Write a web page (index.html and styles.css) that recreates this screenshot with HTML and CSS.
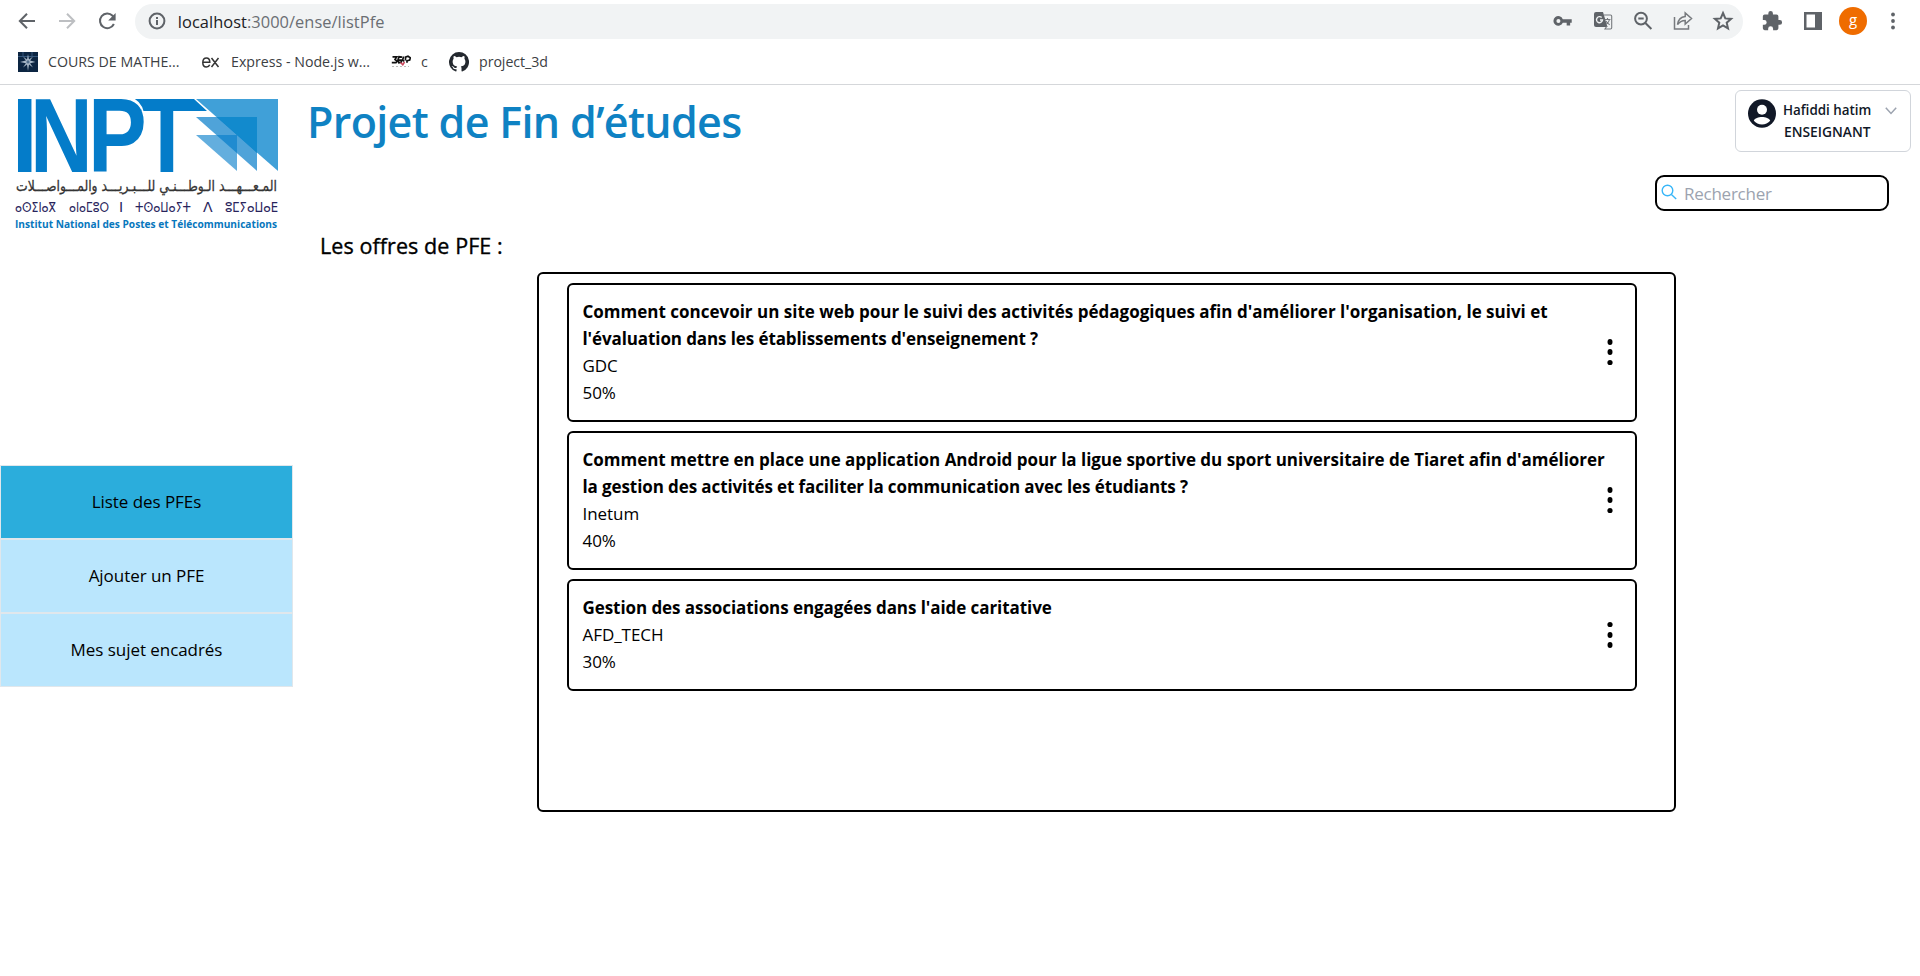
FILE: index.html
```html
<!DOCTYPE html>
<html lang="fr">
<head>
<meta charset="utf-8">
<title>Projet de Fin d’études</title>
<link rel="stylesheet" href="styles.css">
</head>
<body>
<header class="browser">
  <div class="toolbar">
    <nav class="nav-buttons">
      <svg width="24" height="24" viewBox="0 0 24 24"><path class="stroke" d="M20 12H5M12 4.7 4.8 12l7.2 7.3"/></svg>
      <svg width="24" height="24" viewBox="0 0 24 24"><path class="stroke faded" d="M4 12h15M12 4.7l7.2 7.3-7.2 7.3"/></svg>
      <svg width="24" height="24" viewBox="0 0 24 24"><path class="stroke" d="M18.9 15a7.3 7.3 0 1 1-1.3-8.2l1.4 1.6"/><path class="solid" d="M20.6 4v7.4h-7.4z"/></svg>
    </nav>
    <div class="address">
      <svg width="20" height="20" viewBox="0 0 20 20"><circle class="stroke" cx="10" cy="10" r="7.4"/><path class="solid" d="M9 9h2v5H9zM9 6h2v2H9z"/></svg>
      <span class="url"><b>localhost</b>:3000/ense/listPfe</span>
      <div class="address-icons">
        <svg width="22" height="22" viewBox="0 0 24 24"><path class="solid" fill-rule="evenodd" d="M11.800 10H21.500v3.800h-1.700v3.200h-3.800v-3.200h-4.200a5.300 5.300 0 1 1 0-3.800zM7 9.700a2.200 2.200 0 1 0 0 4.400 2.200 2.200 0 0 0 0-4.400z"/></svg>
        <svg width="22" height="22" viewBox="0 0 22 22"><path class="solid" d="M4 2h7l4.500 15H4a2 2 0 0 1-2-2V4a2 2 0 0 1 2-2z"/><path class="thin" d="M12 5h6.500a1.200 1.200 0 0 1 1.200 1.200v11.600a1.200 1.200 0 0 1-1.200 1.200H13l2-3M12.500 9.500h6M15.500 8v1.500M17.500 9.500c-.4 2.400-2 3.700-3 4.500M14 11c1 2 2.500 3 3.700 3.700"/><path class="knockout" d="M9.700 7.600A3 3 0 1 0 10.500 10H8"/></svg>
        <svg width="22" height="22" viewBox="0 0 22 22"><circle class="stroke" cx="9" cy="8.600" r="5.900"/><path class="stroke" d="M13.400 13l6 6M6.300 8.600h5.400"/></svg>
        <svg width="22" height="22" viewBox="0 0 22 22"><path class="thin wide" d="M2.500 7v12h14v-4M5.500 14.500c.7-5 3-7.500 7.700-8V3l6.300 5.500-6.300 5.500v-3.600c-3.500.1-5.700 1.300-7.700 4.100z"/></svg>
        <svg width="22" height="22" viewBox="0 0 22 22"><path class="stroke" d="M11 3l2.300 5.400 5.800.5-4.400 3.800 1.300 5.700-5-3-5 3 1.300-5.700L2.900 8.900l5.800-.5z"/></svg>
      </div>
    </div>
    <div class="browser-actions">
      <svg width="22" height="22" viewBox="0 0 24 24"><path class="solid" d="M20.500 11H19V7a2 2 0 0 0-2-2h-4V3.500a2.500 2.500 0 0 0-5 0V5H4a2 2 0 0 0-2 2v3.800h1.500a2.700 2.700 0 0 1 0 5.400H2V20a2 2 0 0 0 2 2h3.800v-1.500a2.700 2.700 0 0 1 5.400 0V22H17a2 2 0 0 0 2-2v-4h1.500a2.500 2.500 0 0 0 0-5z"/></svg>
      <svg width="18" height="18" viewBox="0 0 18 18"><path class="solid" fill-rule="evenodd" d="M0 0h18v18H0zM2.500 2.500v13H11v-13z"/></svg>
      <span class="avatar">g</span>
      <svg width="6" height="18" viewBox="0 0 6 18"><g class="solid"><circle cx="3" cy="2.500" r="1.900"/><circle cx="3" cy="9" r="1.900"/><circle cx="3" cy="15.500" r="1.900"/></g></svg>
    </div>
  </div>
  <div class="bookmarks">
    <a class="bookmark b-cours"><svg width="20" height="20" viewBox="0 0 20 20"><path fill="#0c2542" d="M0 0h20v20H0z"/><path stroke="#35577c" d="M0 4.500h20M5 0v5M14 0v5"/><path fill="#a9b8c8" d="M10 2l1 5.600 4-3.200-2.900 4.100 5.400 1.400-5.400 1.400 2.900 4.300-4-3L10 19l-1-6.400-4 3 2.900-4.300L2 9.900l5.900-1.400L5 4.400l4 3.200z"/><circle cx="10" cy="9.900" r="1.600" fill="#536f8c"/></svg>COURS DE MATHE...</a>
    <a class="bookmark b-express"><svg width="20" height="20" viewBox="0 0 20 20"><path fill="none" stroke="#333" stroke-width="1.500" d="M1.800 10.200h7c0-3-1.300-4.300-3.400-4.300S1.800 7.500 1.800 10.500s1.500 4.500 3.600 4.500c1.700 0 2.800-.8 3.300-2.200M10.500 6l7 9M17.500 6l-7 9"/></svg>Express - Node.js w...</a>
    <a class="bookmark b-c"><svg width="20" height="20" viewBox="0 0 20 20"><path fill="none" stroke="#111" stroke-width="1.700" d="M1.500 4.800h4.200L4 7.500l2 1.700-1 1.500H.800M11 5.200 8 4.800 6.800 8.500l1 2.200 2.500-.5.400-2H7.500M12.500 4.500l-.8 3.500 1.500 1.500M14.500 8.500V5.200l2.500-.9 2.300 1.500-.6 2.200-2.700.8v2"/><path fill="none" stroke="#c9455b" stroke-width="1.500" d="M9.500 10.500l2.300 2.200L13.500 10"/><path stroke="#bbb" stroke-dasharray="2 2" d="M1 14.500h17"/></svg>c</a>
    <a class="bookmark b-github"><svg width="20" height="20" viewBox="0 0 16 16"><path fill="#24292f" d="M8 0a8 8 0 0 0-2.530 15.590c.4.070.55-.17.55-.38v-1.490c-2.230.48-2.700-.95-2.700-.95-.36-.92-.89-1.170-.89-1.170-.73-.5.060-.49.060-.49.800.060 1.230.83 1.230.83.710 1.230 1.870.87 2.330.67.070-.52.280-.88.510-1.080-1.780-.2-3.640-.89-3.640-3.950 0-.87.310-1.590.82-2.150-.08-.2-.36-1.020.08-2.120 0 0 .67-.22 2.200.82a7.500 7.500 0 0 1 4 0c1.530-1.040 2.200-.82 2.200-.82.440 1.100.16 1.920.08 2.120.51.560.82 1.270.82 2.150 0 3.070-1.870 3.750-3.650 3.950.29.250.54.730.54 1.480v2.200c0 .21.150.46.550.38A8 8 0 0 0 8 0z"/></svg>project_3d</a>
  </div>
</header>

<div class="page">
  <aside class="sidebar">
    <svg class="logo" width="293" height="155" viewBox="0 85 293 155">
      <g class="logo-letters">
        <text transform="translate(11.700 172) scale(.88 1)">I</text>
        <text transform="translate(30.100 172) scale(.82 1)">N</text>
        <text transform="translate(88 172) scale(.83 1)">P</text>
        <text transform="translate(140 172) scale(.83 1)">T</text>
      </g>
      <path fill="#047cc9" d="M134 99h60l13 12h-64c-2-5-5-9-9-12z"/>
      <path fill="none" stroke="#fff" stroke-width="1.500" d="M131 98c6 2 10 6 12 14"/>
      <path fill="#40a0d8" d="M196 99h82v72z"/>
      <path fill="#047cc9" fill-opacity=".7" d="M196 117h61v54z"/>
      <path fill="#047cc9" fill-opacity=".62" d="M196 135h41v36z"/>
      <path fill="#128acd" d="M217 117h40v36z"/>
      <text class="logo-arabic" x="277" y="191" direction="rtl" textLength="261" lengthAdjust="spacingAndGlyphs">المـعـــهـــد الـوطـــنـي للـــبـريـــد والمـــواصـــلات</text>
      <g class="logo-tifinagh">
        <text x="15" y="212" textLength="41" lengthAdjust="spacingAndGlyphs">ⴰⵙⵉⵏⴰⴳ</text>
        <text x="69" y="212" textLength="40" lengthAdjust="spacingAndGlyphs">ⴰⵏⴰⵎⵓⵔ</text>
        <text x="119" y="212">ⵏ</text>
        <text x="135" y="212" textLength="56" lengthAdjust="spacingAndGlyphs">ⵜⵙⴰⵡⴰⵢⵜ</text>
        <text x="203" y="212">ⴷ</text>
        <text x="225" y="212" textLength="53" lengthAdjust="spacingAndGlyphs">ⵓⵎⵢⴰⵡⴰⴹ</text>
      </g>
      <text class="logo-french" x="15" y="228" textLength="262" lengthAdjust="spacingAndGlyphs">Institut National des Postes et Télécommunications</text>
    </svg>
    <nav class="menu">
      <a class="menu-item active">Liste des PFEs</a>
      <a class="menu-item">Ajouter un PFE</a>
      <a class="menu-item">Mes sujet encadrés</a>
    </nav>
  </aside>

  <main class="content">
    <div class="top">
      <h1>Projet de Fin d’études</h1>
      <div class="user">
        <svg width="28" height="29" viewBox="0 0 28 29"><ellipse cx="14" cy="14.500" rx="14" ry="14.300" fill="#111827"/><circle cx="14" cy="10.800" r="5" fill="#fff"/><path fill="#fff" d="M5.800 21.800c1-2.400 4.700-3.700 8.200-3.700s7.200 1.300 8.200 3.700c-2 2.400-5 3.600-8.200 3.600s-6.200-1.200-8.200-3.600z"/></svg>
        <div class="user-text"><span class="user-name">Hafiddi hatim</span><span class="user-role">ENSEIGNANT</span></div>
        <svg class="chevron" width="12" height="8" viewBox="0 0 12 8"><path fill="none" stroke="#9ca3af" stroke-width="1.500" d="M.8.800 6 6.500 11.200.8"/></svg>
      </div>
    </div>
    <label class="search">
      <svg width="16" height="16" viewBox="0 0 16 16"><g fill="none" stroke="#38b6f8" stroke-width="1.400"><circle cx="6.500" cy="6.500" r="5.300"/><path d="M10.400 10.400l4.800 4.600"/></g></svg>
      <span>Rechercher</span>
    </label>
    <h2>Les offres de PFE :</h2>
    <section class="panel">
      <article class="card">
        <div class="card-text">
          <h3>Comment concevoir un site web pour le suivi des activités pédagogiques afin d'améliorer l'organisation, le suivi et<br><span class="tight">l'évaluation dans les établissements d'enseignement ?</span></h3>
          <p>GDC</p><p>50%</p>
        </div>
        <svg class="dots" width="6" height="28" viewBox="0 0 6 28"><ellipse cx="3" cy="4" rx="2.500" ry="2.900"/><ellipse cx="3" cy="14" rx="2.500" ry="2.900"/><circle cx="3" cy="24.500" r="2.600"/></svg>
      </article>
      <article class="card">
        <div class="card-text">
          <h3><span class="snug">Comment mettre en place une application Android pour la ligue sportive du sport universitaire de Tiaret afin d'améliorer</span><br><span class="tight">la gestion des activités et faciliter la communication avec les étudiants ?</span></h3>
          <p>Inetum</p><p>40%</p>
        </div>
        <svg class="dots" width="6" height="28" viewBox="0 0 6 28"><ellipse cx="3" cy="4" rx="2.500" ry="2.900"/><ellipse cx="3" cy="14" rx="2.500" ry="2.900"/><circle cx="3" cy="24.500" r="2.600"/></svg>
      </article>
      <article class="card">
        <div class="card-text">
          <h3><span class="close">Gestion des associations engagées dans l'aide caritative</span></h3>
          <p>AFD_TECH</p><p>30%</p>
        </div>
        <svg class="dots dots-low" width="6" height="28" viewBox="0 0 6 28"><circle cx="3" cy="3.500" r="2.600"/><ellipse cx="3" cy="14" rx="2.500" ry="2.900"/><ellipse cx="3" cy="24" rx="2.500" ry="2.900"/></svg>
      </article>
    </section>
  </main>
</div>
</body>
</html>
```
FILE: styles.css
```css
* { box-sizing: border-box; }
body { margin: 0; background: #fff; color: #000; font: 17px/27px "Open Sans", "Noto Sans", sans-serif; }
h1, h2, h3, p { margin: 0; }
svg { display: block; flex: none; }

.browser { height: 85px; border-bottom: 1px solid #d5d7da; }
.toolbar { display: flex; align-items: center; height: 42px; padding-right: 24px; }
.nav-buttons { display: flex; gap: 16px; width: 135px; padding-left: 15px; }
.stroke { fill: none; stroke: #5f6368; stroke-width: 2; }
.faded { stroke: #bdbfc2; }
.solid { fill: #5f6368; }
.thin { fill: none; stroke: #777a7e; stroke-width: 1.1; }
.wide { stroke-width: 1.5; }
.knockout { fill: none; stroke: #f1f3f4; stroke-width: 1.4; }
.address { display: flex; align-items: center; width: 1610px; height: 35px; padding: 0 9.5px 0 12.5px; border-radius: 18px; background: #f1f3f4; }
.url { margin-left: 10.5px; color: #6a6e73; font-size: 16.4px; letter-spacing: .05px; }
.url b { color: #202124; font-weight: 400; }
.address-icons { display: flex; gap: 18px; margin-left: auto; }
.browser-actions { display: flex; align-items: center; margin-left: 18px; }
.browser-actions svg:nth-child(2) { margin-left: 21px; }
.avatar { width: 28px; height: 28px; margin: 0 23px 0 17px; border-radius: 50%; background: #ef6c00; color: #fff; font-size: 15px; line-height: 24px; text-align: center; }
.bookmarks { display: flex; height: 42px; padding-left: 18px; }
.bookmark { display: flex; align-items: center; height: 39px; gap: 10px; color: #3c4043; font-size: 14.2px; }
.b-cours { width: 183px; }
.b-express { width: 190px; }
.b-c { width: 58px; }
.b-github { letter-spacing: -.05px; }

.page { display: flex; }
.sidebar { width: 293px; }
.logo { overflow: visible; }
.logo-letters { fill: #047cc9; font: bold 106px "Liberation Sans", Arial, sans-serif; }
.logo-arabic { fill: #333; font: 15px "DejaVu Sans", sans-serif; stroke: #333; stroke-width: .3px; }
.logo-tifinagh { fill: #29245c; font: 14px "DejaVu Sans", sans-serif; }
.logo-french { fill: #0877bd; font: 700 10px "Open Sans", sans-serif; }
.menu { margin-top: 225px; }
.menu-item { display: flex; align-items: center; justify-content: center; height: 74px; padding-bottom: 2px; border: 1px solid #e0e7ec; background: #bae6fd; letter-spacing: -.05px; }
.menu-item.active { background: #2baddc; }

.content { flex: 1; }
.top { display: flex; justify-content: space-between; height: 90px; padding: 5px 9px 0 14px; }
h1 { color: #0f82c3; font-size: 43px; font-weight: 600; line-height: 64px; letter-spacing: -.66px; }
.user { display: flex; width: 176px; height: 62px; padding: 8px 13px 8px 12px; border: 1px solid #d1d5db; border-radius: 6px; color: #111827; }
.user-text { display: flex; flex-direction: column; margin-left: 7px; font-weight: 600; line-height: 22px; }
.user-name { font-size: 13.4px; }
.user-role { margin-left: 1px; font-size: 13.8px; }
.chevron { margin: 8px 0 0 auto; }
.search { display: flex; align-items: center; width: 234px; height: 36px; margin-left: auto; margin-right: 31px; padding-left: 4px; border: 2px solid #000; border-radius: 9px; color: #9ca3af; }
.search svg { margin-top: -2px; }
.search span { margin-left: 7px; font-size: 17px; letter-spacing: -.25px; }
h2 { margin: 21px 0 13px 27px; font-size: 21.5px; font-weight: 500; line-height: 27px; letter-spacing: .08px; -webkit-text-stroke: .35px #000; }
.panel { display: flex; flex-direction: column; gap: 9px; width: 1139px; height: 540px; margin-left: 244px; padding: 9px 37px 0 28px; border: 2px solid #000; border-radius: 6px; }
.card { display: flex; align-items: center; justify-content: space-between; padding: 12.5px 23.5px 14.5px 13.5px; border: 2px solid #000; border-radius: 6px; }
.card-text { width: 1024px; flex: none; white-space: nowrap; }
h3 { font-size: 17px; font-weight: 700; }
.snug { letter-spacing: -.025px; }
.tight { letter-spacing: -.1px; }
.close { letter-spacing: -.07px; }
.card p { letter-spacing: -.05px; }
.dots-low { margin-top: 2px; }
```
